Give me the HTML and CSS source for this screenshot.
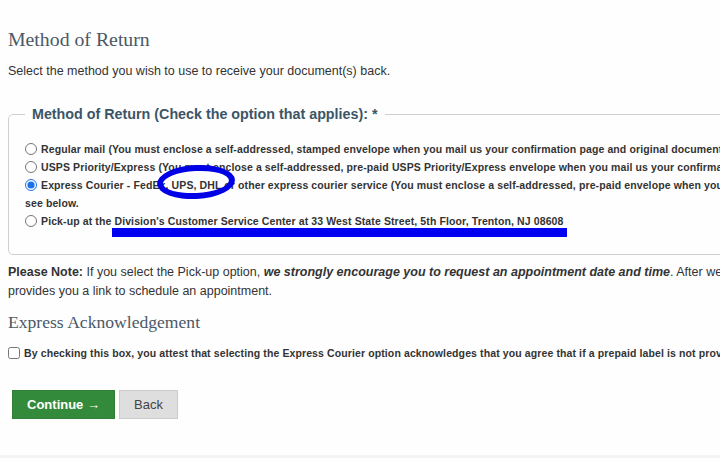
FILE: index.html
```html
<!DOCTYPE html>
<html>
<head>
<meta charset="utf-8">
<link rel="stylesheet" href="styles.css">
</head>
<body>
<div class="page">
  <h2 class="section-title">Method of Return</h2>
  <p class="intro">Select the method you wish to use to receive your document(s) back.</p>

  <fieldset class="options">
    <legend>Method of Return (Check the option that applies): *</legend>
    <label class="opt"><input type="radio" name="m"> Regular mail (You must enclose a self-addressed, stamped envelope when you mail us your confirmation page and original documents).</label>
    <label class="opt"><input type="radio" name="m"> USPS Priority/Express (You must enclose a self-addressed, pre-paid USPS Priority/Express envelope when you mail us your confirmation page and original documents).</label>
    <label class="opt"><input type="radio" name="m" checked> Express Courier - FedEx, UPS, DHL or other express courier service (You must enclose a self-addressed, pre-paid envelope when you mail us your confirmation page and original documents). For international returns,<br>see below.</label>
    <label class="opt"><input type="radio" name="m"> Pick-up at the Division's Customer Service Center at 33 West State Street, 5th Floor, Trenton, NJ 08608</label>
    <span class="mark-ellipse"></span>
    <span class="mark-line"></span>
  </fieldset>

  <p class="note"><b>Please Note:</b> If you select the Pick-up option, <b><i>we strongly encourage you to request an appointment date and time</i></b>. After we receive your request, we will send you a confirmation email that<br>provides you a link to schedule an appointment.</p>

  <h3 class="sub-title">Express Acknowledgement</h3>
  <label class="ack"><input type="checkbox"> By checking this box, you attest that selecting the Express Courier option acknowledges that you agree that if a prepaid label is not provided, your documents will be returned by regular mail.</label>

  <div class="actions">
    <button class="btn btn-primary">Continue &rarr;</button>
    <button class="btn btn-back">Back</button>
  </div>
</div>
<div class="footer-strip"></div>
</body>
</html>
```
FILE: styles.css
```css
html, body {
  margin: 0;
  padding: 0;
  overflow: hidden;
  background: #fefefe;
}
body {
  width: 720px;
  height: 458px;
  position: relative;
  font-family: "Liberation Sans", Arial, sans-serif;
  color: #333;
}
.page {
  width: 1400px;
  padding: 0 8px;
}
.section-title {
  font-family: "Liberation Serif", "Times New Roman", serif;
  font-weight: normal;
  font-size: 19.8px;
  color: #4a5866;
  margin: 0;
  padding-top: 28px;
  line-height: 22px;
}
.intro {
  font-size: 12.5px;
  margin: 13px 0 0;
  line-height: 16px;
}
.options {
  position: relative;
  margin: 27px 0 0;
  padding: 18px 16px 24px 16px;
  border: 1px solid #cfcfcf;
  border-radius: 5px;
  width: 1300px;
  box-sizing: border-box;
}
.options legend {
  font-size: 14.3px;
  font-weight: bold;
  color: #3b5566;
  padding: 0 7px;
  margin-left: 0;
}
.opt {
  display: block;
  font-size: 10.5px;
  font-weight: bold;
  letter-spacing: 0.11px;
  line-height: 18px;
  color: #333;
}
.opt input, .ack input {
  width: 12px;
  height: 12px;
  margin: 0 1px 0 0;
  vertical-align: -2px;
  accent-color: #1a73e8;
}
.mark-ellipse {
  position: absolute;
  left: 148px;
  top: 43px;
  width: 66px;
  height: 22px;
  border: 6px solid #0000e6;
  border-radius: 50%;
  transform: rotate(-3deg);
}
.mark-line {
  position: absolute;
  left: 103px;
  top: 106px;
  width: 455px;
  height: 9px;
  background: #0000f0;
}
.note {
  font-size: 12.5px;
  line-height: 19px;
  margin: 8px 0 0;
}
.sub-title {
  font-family: "Liberation Serif", "Times New Roman", serif;
  font-weight: normal;
  font-size: 17.6px;
  color: #4a5866;
  margin: 10px 0 0;
  line-height: 22px;
}
.ack {
  display: block;
  font-size: 10.5px;
  font-weight: bold;
  letter-spacing: 0.11px;
  margin-top: 12px;
  line-height: 16px;
  white-space: nowrap;
}
.actions {
  display: flex;
  gap: 4px;
  margin: 29px 0 0 4px;
}
.btn {
  font-family: "Liberation Sans", Arial, sans-serif;
  font-size: 13px;
  height: 29px;
  border: 1px solid #ccc;
  padding: 0 8px;
}
.btn-primary {
  background: #338a3a;
  border-color: #2f8036;
  color: #fff;
  font-weight: bold;
  width: 103px;
}
.btn-back {
  background: #dedede;
  color: #444;
  width: 59px;
}
.footer-strip {
  position: absolute;
  left: 0;
  right: 0;
  bottom: 0;
  height: 3px;
  background: #f4f4f4;
}
```
